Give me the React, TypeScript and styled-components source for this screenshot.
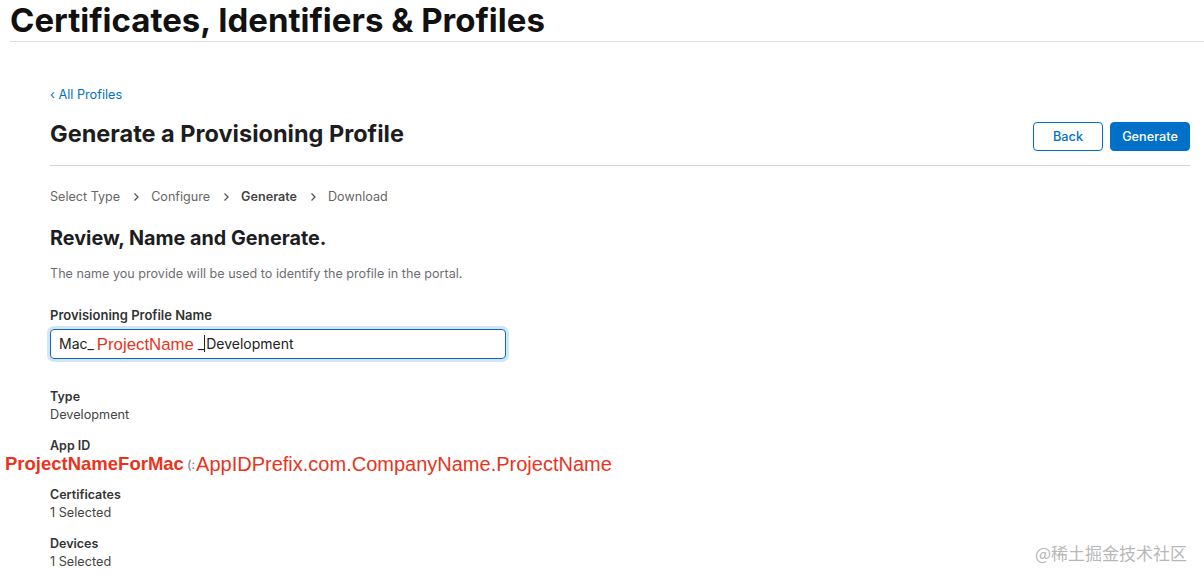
import React from "react";
import styled, { createGlobalStyle } from "styled-components";

const Global = createGlobalStyle`
  html, body { margin: 0; padding: 0; background: #fff; }
  body { font-family: Inter, "Noto Sans", "Liberation Sans", sans-serif; color: #1d1d1f; }
`;

const Page = styled.div`
  position: relative;
  width: 1204px;
  height: 584px;
  overflow: hidden;
`;

const TopBar = styled.header`
  margin: 0 0 0 10px;
  border-bottom: 1px solid #dcdcdc;
`;

const SiteTitle = styled.h1`
  margin: 0;
  height: 41px;
  font-size: 33px;
  line-height: 41px;
  font-weight: 700;
  letter-spacing: 0;
  color: #111;
`;

const Main = styled.main`
  padding: 44px 14px 0 50px;
`;

const BackLink = styled.a`
  display: block;
  font-size: 12.7px;
  line-height: 18px;
  color: #0070c9;
  text-decoration: none;
`;

const TitleRow = styled.div`
  display: flex;
  align-items: flex-start;
  justify-content: space-between;
  margin-top: 18px;
  padding-bottom: 14px;
  border-bottom: 1px solid #d6d6d6;
`;

const PageTitle = styled.h2`
  margin: 0;
  font-size: 23.5px;
  line-height: 23px;
  font-weight: 700;
  color: #1d1d1f;
`;

const Buttons = styled.div`
  display: flex;
  gap: 7px;
`;

const Button = styled.button<{ $primary?: boolean }>`
  box-sizing: border-box;
  height: 29px;
  width: ${(p) => (p.$primary ? "80px" : "70px")};
  border-radius: 4px;
  border: 1px solid #0070c9;
  background: ${(p) => (p.$primary ? "#0070c9" : "#fff")};
  color: ${(p) => (p.$primary ? "#fff" : "#0070c9")};
  font-family: inherit;
  font-size: 12.7px;
  font-weight: 500;
  padding: 0;
`;

const Steps = styled.ol`
  display: flex;
  align-items: center;
  list-style: none;
  margin: 22px 0 0;
  padding: 0;
  font-size: 12.6px;
  line-height: 18px;
  color: #555;
`;

const Step = styled.li<{ $current?: boolean }>`
  display: flex;
  align-items: center;
  font-weight: ${(p) => (p.$current ? 600 : 400)};
  color: ${(p) => (p.$current ? "#444" : "#666")};
`;

const Chevron = styled.svg`
  width: 7px;
  height: 10px;
  margin: 0 11px 0 13px;
`;

const SectionTitle = styled.h3`
  margin: 20px 0 0;
  font-size: 19.8px;
  line-height: 24px;
  font-weight: 700;
  color: #1d1d1f;
`;

const Description = styled.p`
  margin: 15px 0 0;
  font-size: 12.6px;
  line-height: 17px;
  color: #6e6e73;
`;

const FieldLabel = styled.label`
  display: block;
  margin-top: 25px;
  font-size: 13px;
  line-height: 16px;
  font-weight: 600;
  color: #333;
`;

const InputBox = styled.div`
  box-sizing: border-box;
  margin-top: 6px;
  width: 456px;
  height: 30px;
  border: 1px solid #0a6cc4;
  border-radius: 4px;
  box-shadow: 0 0 0 3px rgba(0, 112, 201, 0.18);
  display: flex;
  align-items: center;
  padding: 0 0 1px 8px;
  font-size: 14px;
  color: #222;
  white-space: pre;
`;

const RedInline = styled.span`
  color: #e8341c;
  font-family: "Liberation Sans", Arial, sans-serif;
  font-size: 16.8px;
  margin: 2px 0 0 -1px;
`;

const Caret = styled.span`
  display: inline-block;
  width: 1px;
  height: 17px;
  background: #222;
  margin-right: 1px;
`;

const Details = styled.dl`
  margin: 29px 0 0;
  display: flex;
  flex-direction: column;
  gap: 13px;
`;

const DetailItem = styled.div``;

const DetailTerm = styled.dt`
  font-size: 12.5px;
  line-height: 18px;
  font-weight: 600;
  color: #333;
`;

const DetailValue = styled.dd`
  margin: 0;
  font-size: 12.7px;
  line-height: 18px;
  color: #444;
`;

const AnnotatedValue = styled.dd`
  margin: 0 0 0 -45px;
  height: 18px;
  display: flex;
  align-items: center;
  white-space: nowrap;
  font-family: "Liberation Sans", Arial, sans-serif;
  color: #e8341c;
`;

const AnnoBold = styled.span`
  font-size: 18.5px;
  font-weight: 700;
`;

const AnnoHidden = styled.span`
  font-family: Inter, sans-serif;
  font-size: 12.5px;
  color: #777;
  margin: 0 1px 0 3px;
`;

const AnnoRegular = styled.span`
  font-size: 20px;
`;

const Watermark = styled.div`
  position: absolute;
  right: 17px;
  top: 542px;
  font-family: "Noto Sans CJK SC", "Noto Sans", sans-serif;
  font-size: 17px;
  line-height: 22px;
  color: #b8b8b8;
`;

const ChevronIcon = () => (
  <Chevron viewBox="0 0 7 10">
    <path d="M1.5 1.5 L5 5 L1.5 8.5" fill="none" stroke="#555" strokeWidth="1.3" />
  </Chevron>
);

export default function App() {
  const steps = ["Select Type", "Configure", "Generate", "Download"];
  return (
    <Page>
      <Global />
      <TopBar>
        <SiteTitle>Certificates, Identifiers &amp; Profiles</SiteTitle>
      </TopBar>
      <Main>
        <BackLink href="#">‹ All Profiles</BackLink>
        <TitleRow>
          <PageTitle>Generate a Provisioning Profile</PageTitle>
          <Buttons>
            <Button>Back</Button>
            <Button $primary>Generate</Button>
          </Buttons>
        </TitleRow>
        <Steps>
          {steps.map((s, i) => (
            <Step key={s} $current={s === "Generate"}>
              {s}
              {i < steps.length - 1 && <ChevronIcon />}
            </Step>
          ))}
        </Steps>
        <SectionTitle>Review, Name and Generate.</SectionTitle>
        <Description>The name you provide will be used to identify the profile in the portal.</Description>
        <FieldLabel>Provisioning Profile Name</FieldLabel>
        <InputBox>
          Mac_ <RedInline>ProjectName</RedInline> _<Caret />Development
        </InputBox>
        <Details>
          <DetailItem>
            <DetailTerm>Type</DetailTerm>
            <DetailValue>Development</DetailValue>
          </DetailItem>
          <DetailItem>
            <DetailTerm>App ID</DetailTerm>
            <AnnotatedValue>
              <AnnoBold>ProjectNameForMac</AnnoBold>
              <AnnoHidden>(:</AnnoHidden>
              <AnnoRegular>AppIDPrefix.com.CompanyName.ProjectName</AnnoRegular>
            </AnnotatedValue>
          </DetailItem>
          <DetailItem>
            <DetailTerm>Certificates</DetailTerm>
            <DetailValue>1 Selected</DetailValue>
          </DetailItem>
          <DetailItem>
            <DetailTerm>Devices</DetailTerm>
            <DetailValue>1 Selected</DetailValue>
          </DetailItem>
        </Details>
      </Main>
      <Watermark>@稀土掘金技术社区</Watermark>
    </Page>
  );
}
